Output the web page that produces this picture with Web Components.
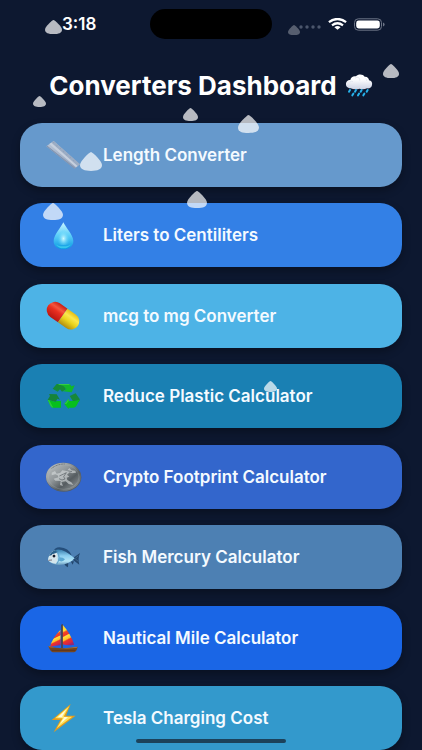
<!DOCTYPE html>
<html lang="en">
<head>
<meta charset="utf-8">
<meta name="viewport" content="width=device-width, initial-scale=1">
<title>Converters Dashboard</title>
<style>
    body {
        margin: 0;
        background: #0d1830;
        color: #fff;
        font-family: Inter, "Liberation Sans", sans-serif;
    }
</style>
</head>
<body>

<template id="status-bar">
    <style>
        :host {
            display: grid;
            grid-template-columns: 1fr auto 1fr;
            align-items: center;
            height: 48px;
        }
        time {
            padding-left: 62px;
            font-size: 17px;
            font-weight: 600;
        }
        .island {
            width: 122px;
            height: 30px;
            border-radius: 15px;
            background: #000;
        }
        .signals {
            display: flex;
            justify-content: flex-end;
            align-items: center;
            gap: 7px;
            padding-right: 37px;
        }
        svg { display: block; }
    </style>
    <time>3:18</time>
    <div class="island"></div>
    <div class="signals">
        <svg width="22" height="12" viewBox="0 0 22 12" fill="#4b566c">
            <circle cx="2" cy="9" r="1.7"/><circle cx="8" cy="9" r="1.7"/><circle cx="14" cy="9" r="1.7"/><circle cx="20" cy="9" r="1.7"/>
        </svg>
        <svg width="19" height="12" viewBox="0 0 19 12" fill="none" stroke="#fff" stroke-width="2.3">
            <path d="M.9 4.2Q9.5-2.2 18.1 4.2"/>
            <path d="M4 7.3Q9.5 3.1 15 7.3"/>
            <path d="M9.5 11.8L6.4 9.2Q9.5 6.9 12.6 9.2Z" fill="#fff" stroke="none"/>
        </svg>
        <svg width="31" height="13" viewBox="0 0 31 13">
            <rect x=".5" y=".8" width="27" height="11.4" rx="3.8" fill="none" stroke="#6c7486"/>
            <rect x="2.2" y="2.5" width="23.6" height="8" rx="2.4" fill="#fff"/>
            <path d="M29 4.5Q30.6 5 30.6 6.5T29 8.5Z" fill="#6c7486"/>
        </svg>
    </div>
</template>

<template id="dashboard-title">
    <style>
        :host {
            display: flex;
            justify-content: center;
            align-items: center;
            gap: 8px;
            height: 75px;
        }
        h1 {
            margin: 0;
            font-size: 26px;
            font-weight: 700;
            line-height: 32px;
            white-space: nowrap;
        }
        svg { display: block; }
    </style>
    <h1><slot></slot></h1>
    <svg width="28" height="24" viewBox="401 223 84 72">
        <defs>
            <linearGradient id="cloud" x2="0" y2="1"><stop offset=".3" stop-color="#fff"/><stop offset="1" stop-color="#ccd2e4"/></linearGradient>
        </defs>
        <path d="M418 266C407 266 403 259 404 251C405 244 411 240 417 241C418 232 427 228 434 230C440 223 455 223 460 231C468 230 473 236 473 242C480 243 484 249 482 256C481 263 475 267 467 266Q456 271 445 267Q430 271 418 266Z" fill="url(#cloud)"/>
        <path d="M431 236Q437 230 442 234Q447 238 445 243M463 236Q467 239 466 244M415 247Q421 243 425 246" fill="none" stroke="#dce1ec" stroke-width="2"/>
        <g stroke="#27b3ec" stroke-width="6" stroke-linecap="round">
            <path d="M416 271L413 276M434 271L431 276M451 271L448 276M469 271L466 276M426 282L423 287M443 282L440 287M459 282L456 287"/>
        </g>
    </svg>
</template>

<template id="converter-card">
    <style>
        :host { display: block; }
        button {
            display: flex;
            align-items: center;
            gap: 21px;
            width: 100%;
            height: 64px;
            padding: 0 24px;
            border: 0;
            border-radius: 22px;
            background: var(--card-color);
            box-shadow: 0 4px 8px rgba(0, 0, 0, 0.3);
            color: #f4faff;
            font: 600 17px/24px Inter, "Liberation Sans", sans-serif;
            text-align: left;
            cursor: pointer;
        }
    </style>
    <button type="button">
        <slot name="icon"></slot>
        <span><slot></slot></span>
    </button>
</template>

<template id="rain-drop">
    <style>
        :host {
            position: absolute;
            pointer-events: none;
        }
        svg {
            display: block;
            width: 100%;
            height: 100%;
        }
    </style>
    <svg viewBox="0 0 22 18" preserveAspectRatio="none">
        <path d="M11 0C12.4 0 22 8.5 22 12.4C22 16.6 17.5 18 11 18S0 16.6 0 12.4C0 8.5 9.6 0 11 0Z" fill="#fff"/>
    </svg>
</template>

<template id="converters-dashboard">
    <style>
        :host {
            position: relative;
            display: flex;
            flex-direction: column;
            min-height: 100vh;
            overflow: hidden;
        }
        main {
            flex: 1;
            display: flex;
            flex-direction: column;
            justify-content: space-between;
            gap: 16px;
            padding: 0 20px;
        }
        .home {
            position: fixed;
            bottom: 7px;
            left: 50%;
            width: 150px;
            height: 4px;
            margin-left: -75px;
            border-radius: 2px;
            background: rgba(22, 38, 54, 0.75);
        }
    </style>
    <status-bar></status-bar>
    <dashboard-title>Converters Dashboard</dashboard-title>
    <main><slot></slot></main>
    <slot name="rain"></slot>
    <div class="home"></div>
</template>

<!-- Card icons, one template each -->
<template id="icon-ruler">
    <svg viewBox="102 69 114 102">
        <defs><linearGradient id="g" x1="0" y1="0" x2="1" y2="1"><stop stop-color="#b9c5d6"/><stop offset="1" stop-color="#8fa2bd"/></linearGradient></defs>
        <path d="M109 94L131 78L210 148L194 161Z" fill="url(#g)"/>
        <path d="M124 83L131 78L210 148L203 153Z" fill="#9cadc4"/>
        <path d="M118 87L124 83L203 153L198 157Z" fill="#c6d0de"/>
        <path d="M109 94L194 161L196 159L112 92Z" fill="#8192ad"/>
        <path d="M129 84l4-3M139 93l4-3M149 102l4-3M159 111l4-3M169 120l4-3M179 129l4-3M189 138l4-3" stroke="#8396b2" stroke-width="1.4"/>
    </svg>
</template>
<template id="icon-drop">
    <svg viewBox="102 70 114 102">
        <defs>
            <linearGradient id="g" x2="0" y2="1"><stop stop-color="#c8f4ff"/><stop offset=".45" stop-color="#62d2fa"/><stop offset="1" stop-color="#0897e2"/></linearGradient>
            <radialGradient id="h" cx=".5" cy=".65" r=".5"><stop stop-color="#d2fbff"/><stop offset="1" stop-color="#48cbf8" stop-opacity="0"/></radialGradient>
        </defs>
        <path d="M160 83C164 94 190 121 190 139C190 155 177 164 160 164S131 155 131 139C131 121 156 94 160 83Z" fill="url(#g)"/>
        <path d="M160 96C163 104 180 124 180 138C180 148 172 151 160 151S141 148 141 138C141 124 157 104 160 96Z" fill="url(#h)"/>
        <path d="M136 147Q145 161 160 161T185 147Q177 155 160 155T136 147Z" fill="#39c6ed"/>
    </svg>
</template>
<template id="icon-pill">
    <svg viewBox="42 27 114 102">
        <defs>
            <linearGradient id="g" x2="0" y2="1"><stop stop-color="#c91d12"/><stop offset=".3" stop-color="#f4553f"/><stop offset=".5" stop-color="#e92f20"/><stop offset="1" stop-color="#b81711"/></linearGradient>
            <linearGradient id="h" x2="0" y2="1"><stop stop-color="#e7bd12"/><stop offset=".3" stop-color="#fbe84e"/><stop offset=".6" stop-color="#ead31c"/><stop offset="1" stop-color="#b08c10"/></linearGradient>
        </defs>
        <g transform="rotate(35 99 77)">
            <path d="M98 52H70A25 25 0 0 0 70 102H98Z" fill="url(#g)"/>
            <path d="M98 52H128A25 25 0 0 1 128 102H98Z" fill="url(#h)"/>
        </g>
    </svg>
</template>
<template id="icon-recycle">
    <svg viewBox="42 28 114 102">
        <path d="M80 43H101L108 59L96 66L90 59L83 66L68 57Z" fill="#168b37"/>
        <path d="M84 43H116Q121 43 124 50L134 47L125 68L99 65L109 59L101 50Z" fill="#12b82b"/>
        <path d="M84 43H116L120 46H88Z" fill="#36cb43"/>
        <path d="M57 73L80 74L90 90L82 87L77 97L53 90L60 79Z" fill="#168438"/>
        <path d="M53 90L77 97L79 94H93V114H69Q64 114 61 108Z" fill="#07c01d"/>
        <path d="M53 90L58 92L70 114Q64 114 61 108Z" fill="#2acb3c"/>
        <path d="M119 79L137 71L149 88Q150 92 146 97L129 95Z" fill="#17883a"/>
        <path d="M103 103L116 87V94H132L149 90L139 109Q136 114 130 114H116V119Z" fill="#07c01d"/>
        <path d="M103 103L116 87V94L109 103Z" fill="#2acb3c"/>
    </svg>
</template>
<template id="icon-coin">
    <svg viewBox="42 30 114 102">
        <defs><linearGradient id="g" x2="1" y2="1"><stop stop-color="#c3c7c8"/><stop offset=".4" stop-color="#92989b"/><stop offset=".65" stop-color="#555c60"/><stop offset="1" stop-color="#a3a8ab"/></linearGradient></defs>
        <ellipse cx="101" cy="82" rx="53" ry="43.500" fill="#555e66"/>
        <ellipse cx="100" cy="80.500" rx="52" ry="42.500" fill="url(#g)"/>
        <ellipse cx="101" cy="81" rx="46" ry="37" fill="none" stroke="#b9bfc2" stroke-width="1.500" opacity=".45"/>
        <path d="M65 68L75 63L80 71L91 68L97 61L110 63L118 54L124 61L136 62L138 68L126 70L119 67L111 74L118 80L110 83L112 90L124 97L130 105L116 102L107 94L94 96L99 108L90 105L92 93L76 92L71 86L85 82L83 76L76 73L65 76Z" fill="#d2d7d9" opacity=".65"/>
        <path d="M88 78L101 72L109 68L101 80L105 87L96 90L87 86M112 62L126 65" fill="none" stroke="#596165" stroke-width="2"/>
        <path d="M65 55Q82 42 104 42" fill="none" stroke="#62696d" stroke-width="3" stroke-dasharray="3 2"/>
    </svg>
</template>
<template id="icon-fish">
    <svg viewBox="42 30 114 102">
        <defs><linearGradient id="g" x2="0" y2="1"><stop stop-color="#397fae"/><stop offset=".4" stop-color="#8acdf0"/><stop offset=".75" stop-color="#b4e5f7"/><stop offset="1" stop-color="#6498be"/></linearGradient></defs>
        <path d="M71 63Q76 51 89 52Q116 54 125 76L111 80Z" fill="#254e7b"/>
        <path d="M101 99L115 96L114 112Q106 109 101 99ZM122 94L132 94L128 104ZM129 84L150 69Q143 85 148 104L129 90Z" fill="#23476f"/>
        <path d="M54 91Q57 67 76 60Q98 53 134 85Q116 105 87 105Q64 104 54 91Z" fill="url(#g)"/>
        <path d="M54 91Q57 67 76 60Q90 78 78 101Q64 100 54 91Z" fill="#d4e5ec"/>
        <path d="M57 78Q63 65 76 60L85 66Q72 70 66 75Z" fill="#2c638d"/>
        <path d="M81 64Q94 82 80 103" fill="none" stroke="#5b9cc5" stroke-width="3"/>
        <path d="M88 82Q100 82 105 88Q98 98 87 92Z" fill="#5aa7d2"/>
        <circle cx="72" cy="78" r="6.500" fill="#fff"/><circle cx="72" cy="78" r="4.500" fill="#111d2e"/>
        <path d="M55 91L66 90" stroke="#6c5f6a" stroke-width="2.500"/>
        <path d="M136 85L145 77M136 87L145 94" stroke="#5383ab" stroke-width="1.500"/>
    </svg>
</template>
<template id="icon-boat">
    <svg viewBox="42 31 114 102">
        <defs>
            <linearGradient id="g" x1=".3" x2=".6" y2="1"><stop stop-color="#ffd22c"/><stop offset=".22" stop-color="#ffdf36"/><stop offset=".3" stop-color="#f24a24"/><stop offset=".45" stop-color="#ee3528"/><stop offset=".5" stop-color="#ffe33c"/><stop offset=".65" stop-color="#ffc02b"/><stop offset=".72" stop-color="#ed3427"/><stop offset=".88" stop-color="#d62647"/><stop offset="1" stop-color="#8f267a"/></linearGradient>
        </defs>
        <path d="M91 58L92 104Q75 104 60 109Q66 83 91 58Z" fill="url(#g)"/>
        <path d="M98 42Q120 66 133 102Q113 106 98 101Z" fill="url(#g)"/>
        <path d="M94 42L98 40V113H94Z" fill="#593820"/>
        <path d="M55 106L76 111Q108 115 143 108Q140 123 132 125H68Q60 122 55 106Z" fill="#754620"/>
        <path d="M55 106L76 111Q108 115 143 108L141 111Q107 116 58 110Z" fill="#b07a3e"/>
        <path d="M65 119H136" stroke="#512f1a" stroke-width="2"/>
    </svg>
</template>
<template id="icon-bolt">
    <svg viewBox="102 63 114 102">
        <path d="M182 72L125 120L151 120L131 157L197 107L168 107Z" fill="#e59b1b"/>
        <path d="M178 78L135 115L158 115L140 145L187 110L161 110Z" fill="#ffe55d"/>
        <path d="M170 87L143 112L163 112L150 132L174 112L156 110Z" fill="#fffce0"/>
    </svg>
</template>
<template id="converter-icon">
    <style>
        :host { display: block; }
        svg {
            display: block;
            width: 38px;
            height: 34px;
        }
    </style>
</template>

<converters-dashboard>
    <converter-card style="--card-color: #6699cc"><converter-icon slot="icon" name="ruler"></converter-icon>Length Converter</converter-card>
    <converter-card style="--card-color: #3380e6"><converter-icon slot="icon" name="drop"></converter-icon>Liters to Centiliters</converter-card>
    <converter-card style="--card-color: #4db3e6"><converter-icon slot="icon" name="pill"></converter-icon>mcg to mg Converter</converter-card>
    <converter-card style="--card-color: #1a80b3"><converter-icon slot="icon" name="recycle"></converter-icon>Reduce Plastic Calculator</converter-card>
    <converter-card style="--card-color: #3366cc"><converter-icon slot="icon" name="coin"></converter-icon>Crypto Footprint Calculator</converter-card>
    <converter-card style="--card-color: #4d80b3"><converter-icon slot="icon" name="fish"></converter-icon>Fish Mercury Calculator</converter-card>
    <converter-card style="--card-color: #1a66e6"><converter-icon slot="icon" name="boat"></converter-icon>Nautical Mile Calculator</converter-card>
    <converter-card style="--card-color: #3399cc"><converter-icon slot="icon" name="bolt"></converter-icon>Tesla Charging Cost</converter-card>

    <rain-drop slot="rain" x="45" y="20" size="17"></rain-drop>
    <rain-drop slot="rain" x="288" y="25" size="12" alpha="0.3"></rain-drop>
    <rain-drop slot="rain" x="383" y="64" size="16"></rain-drop>
    <rain-drop slot="rain" x="33" y="96" size="13"></rain-drop>
    <rain-drop slot="rain" x="183" y="108" size="15"></rain-drop>
    <rain-drop slot="rain" x="238" y="115" size="21"></rain-drop>
    <rain-drop slot="rain" x="80" y="152" size="22"></rain-drop>
    <rain-drop slot="rain" x="187" y="191" size="20"></rain-drop>
    <rain-drop slot="rain" x="43" y="203" size="20"></rain-drop>
    <rain-drop slot="rain" x="264" y="381" size="13"></rain-drop>
</converters-dashboard>

<script>
class TemplateElement extends HTMLElement {
    constructor() {
        super();
        this.attachShadow({mode: 'open'});
        const template = document.getElementById(this.localName);
        this.shadowRoot.appendChild(template.content.cloneNode(true));
    }
}

class StatusBar extends TemplateElement {}
class DashboardTitle extends TemplateElement {}
class ConverterCard extends TemplateElement {}
class ConvertersDashboard extends TemplateElement {}

class ConverterIcon extends TemplateElement {
    connectedCallback() {
        const icon = document.getElementById(`icon-${this.getAttribute('name')}`);
        this.shadowRoot.appendChild(icon.content.cloneNode(true));
        this.setAttribute('aria-hidden', 'true');
    }
}

class RainDrop extends TemplateElement {
    connectedCallback() {
        const size = Number(this.getAttribute('size'));
        this.style.left = `${this.getAttribute('x')}px`;
        this.style.top = `${this.getAttribute('y')}px`;
        this.style.width = `${size}px`;
        this.style.height = `${Math.round(size * 0.85)}px`;
        this.style.opacity = this.getAttribute('alpha') || 0.7;
    }
}

customElements.define('status-bar', StatusBar);
customElements.define('dashboard-title', DashboardTitle);
customElements.define('converter-card', ConverterCard);
customElements.define('converter-icon', ConverterIcon);
customElements.define('rain-drop', RainDrop);
customElements.define('converters-dashboard', ConvertersDashboard);
</script>
</body>
</html>
